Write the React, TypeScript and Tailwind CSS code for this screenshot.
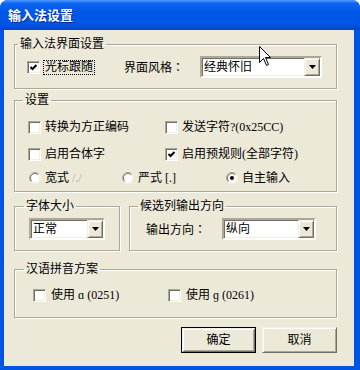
import React from 'react';

function CheckBox({ checked = false }: { checked?: boolean }) {
  return (
    <span className="w-[13px] h-[13px] shrink-0 bg-white border border-t-[#ACA899] border-l-[#ACA899] border-b-white border-r-white shadow-[inset_1px_1px_0_#716F64,inset_-1px_-1px_0_#F1EFE2] flex items-center justify-center">
      {checked && (
        <svg width="9" height="9" viewBox="0 0 9 9">
          <polyline points="1.5,4 3.5,6 7.5,2" fill="none" stroke="#000" strokeWidth="2" />
        </svg>
      )}
    </span>
  );
}

function Radio({ checked = false }: { checked?: boolean }) {
  return (
    <svg width="12" height="12" viewBox="0 0 12 12" className="shrink-0">
      <circle cx="6" cy="6" r="5.5" fill="#fff" />
      <path d="M9.9 2.1 A5.5 5.5 0 0 0 2.1 9.9" fill="none" stroke="#ACA899" />
      <path d="M9.2 2.8 A4.5 4.5 0 0 0 2.8 9.2" fill="none" stroke="#716F64" />
      <path d="M9.2 2.8 A4.5 4.5 0 0 1 2.8 9.2" fill="none" stroke="#F1EFE2" />
      {checked && <circle cx="6" cy="6" r="2" fill="#000" />}
    </svg>
  );
}

function Combo({ value, width }: { value: string; width: string }) {
  return (
    <div
      className={`${width} h-[22px] shrink-0 flex bg-white border-2 border-t-[#ACA899] border-l-[#ACA899] border-b-white border-r-white shadow-[inset_1px_1px_0_#716F64,inset_-1px_-1px_0_#F1EFE2]`}
    >
      <span className="flex-1 pl-[2px] pt-[1px] leading-[16px] text-black">{value}</span>
      <span className="w-[16px] h-[18px] bg-[#ECE9D8] border border-t-[#F1EFE2] border-l-[#F1EFE2] border-b-[#716F64] border-r-[#716F64] shadow-[inset_1px_1px_0_#fff,inset_-1px_-1px_0_#ACA899] flex items-center justify-center">
        <svg width="7" height="4" viewBox="0 0 7 4">
          <polygon points="0,0 7,0 3.5,4" fill="#000" />
        </svg>
      </span>
    </div>
  );
}

const groupCls =
  'border border-[#ACA899] shadow-[inset_1px_1px_0_#fff,1px_1px_0_#fff] p-0 m-0 min-w-0';

// full-width colon, centred in its cell as in the original font
const colon = <span className="font-['Noto_Sans_CJK_JP',sans-serif]">：</span>;

export default function App() {
  return (
    <div className="w-[360px] h-[370px] bg-[#0054E3] rounded-t-[8px] flex flex-col relative text-[12px] leading-[14px] text-black font-['Liberation_Serif','Noto_Sans_CJK_SC',serif]">
      {/* title bar */}
      <div className="h-[30px] shrink-0 rounded-t-[8px] bg-[linear-gradient(180deg,#4A9BFF_0%,#0E63F0_12%,#0058E8_40%,#0055E5_80%,#0046D4_100%)] flex items-center pl-[8px]">
        <span className="text-white text-[13px] font-bold font-['Noto_Sans_CJK_SC',sans-serif] [text-shadow:1px_1px_0_#0A2A8A]">
          输入法设置
        </span>
      </div>

      {/* body */}
      <div className="flex-1 ml-[4px] mr-[6px] mb-[4px] bg-[#ECE9D8] flex flex-col pl-[10px] pr-[17px]">
        <fieldset className={`${groupCls} mt-[7px] h-[52px]`}>
          <legend className="ml-[3px] px-[2px] leading-[14px]">输入法界面设置</legend>
          <div className="flex items-center h-[22px] mt-[5px] pl-[12px]">
            <div className="w-[97px] flex items-center gap-[3px]">
              <CheckBox checked />
              <span className="border border-dotted border-black px-[1px] leading-[13px]">光标跟随</span>
            </div>
            <span className="w-[76px]">界面风格{colon}</span>
            <Combo value="经典怀旧" width="w-[122px]" />
          </div>
        </fieldset>

        <fieldset className={`${groupCls} mt-[4px] h-[99px]`}>
          <legend className="ml-[8px] px-[2px] leading-[14px]">设置</legend>
          <div className="flex items-center h-[16px] mt-[12px] pl-[13px]">
            <div className="w-[137px] flex items-center gap-[4px]">
              <CheckBox />
              <span>转换为方正编码</span>
            </div>
            <div className="flex items-center gap-[4px]">
              <CheckBox />
              <span>发送字符?(0x25CC)</span>
            </div>
          </div>
          <div className="flex items-center h-[16px] mt-[11px] pl-[13px]">
            <div className="w-[137px] flex items-center gap-[4px]">
              <CheckBox />
              <span>启用合体字</span>
            </div>
            <div className="flex items-center gap-[4px]">
              <CheckBox checked />
              <span>启用预规则(全部字符)</span>
            </div>
          </div>
          <div className="flex items-center h-[16px] mt-[8px] pl-[14px]">
            <div className="w-[93px] flex items-center gap-[4px]">
              <Radio />
              <span>
                宽式 <span className="text-[#ACA899]">/./</span>
              </span>
            </div>
            <div className="w-[104px] flex items-center gap-[4px]">
              <Radio />
              <span>严式 [.]</span>
            </div>
            <div className="flex items-center gap-[4px]">
              <Radio checked />
              <span>自主输入</span>
            </div>
          </div>
        </fieldset>

        <div className="flex gap-[9px] mt-[7px] h-[52px]">
          <fieldset className={`${groupCls} w-[106px] h-[52px]`}>
            <legend className="ml-[9px] px-[2px] leading-[14px]">字体大小</legend>
            <div className="mt-[5px] ml-[14px]">
              <Combo value="正常" width="w-[76px]" />
            </div>
          </fieldset>
          <fieldset className={`${groupCls} flex-1 h-[52px]`}>
            <legend className="ml-[8px] px-[2px] leading-[14px]">候选列输出方向</legend>
            <div className="flex items-center mt-[5px] pl-[16px]">
              <span className="w-[76px]">输出方向{colon}</span>
              <Combo value="纵向" width="w-[94px]" />
            </div>
          </fieldset>
        </div>

        <fieldset className={`${groupCls} mt-[11px] h-[56px]`}>
          <legend className="ml-[9px] px-[2px] leading-[14px]">汉语拼音方案</legend>
          <div className="flex items-center h-[16px] mt-[11px] pl-[18px]">
            <div className="w-[135px] flex items-center gap-[5px]">
              <CheckBox />
              <span>使用 ɑ (0251)</span>
            </div>
            <div className="flex items-center gap-[5px]">
              <CheckBox />
              <span>使用 ɡ (0261)</span>
            </div>
          </div>
        </fieldset>

        <div className="flex justify-end gap-[6px] mt-[9px]">
          <button className="w-[75px] h-[26px] bg-[#ECE9D8] border border-black shadow-[inset_1px_1px_0_#F1EFE2,inset_-1px_-1px_0_#716F64,inset_2px_2px_0_#fff,inset_-2px_-2px_0_#ACA899] flex items-center justify-center">
            确定
          </button>
          <button className="w-[75px] h-[26px] bg-[#ECE9D8] border border-t-[#F1EFE2] border-l-[#F1EFE2] border-b-[#716F64] border-r-[#716F64] shadow-[inset_1px_1px_0_#fff,inset_-1px_-1px_0_#ACA899] flex items-center justify-center">
            取消
          </button>
        </div>
      </div>

      {/* mouse pointer */}
      <svg width="13" height="21" viewBox="0 0 13 21" className="absolute left-[259px] top-[46px]">
        <path
          d="M0.5 0.5 L0.5 16.5 L4.5 12.5 L7.5 19.5 L9.5 18.5 L6.5 11.5 L11.5 11.5 Z"
          fill="#fff"
          stroke="#000"
        />
      </svg>
    </div>
  );
}
